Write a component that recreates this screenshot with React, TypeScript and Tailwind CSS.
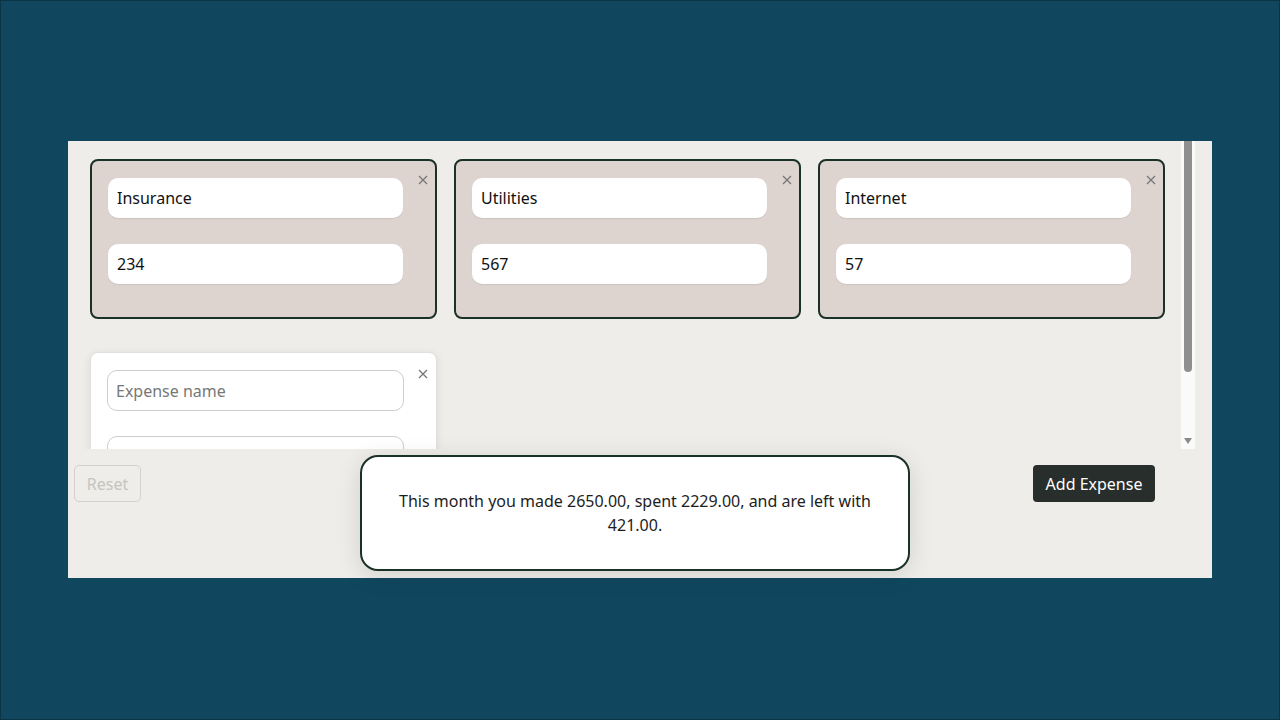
import { useState } from "react";

type Expense = {
  id: number;
  name: string;
  amount: string;
};

const initialExpenses: Expense[] = [
  { id: 1, name: "Insurance", amount: "234" },
  { id: 2, name: "Utilities", amount: "567" },
  { id: 3, name: "Internet", amount: "57" },
];

function CloseButton() {
  return (
    <button
      type="button"
      className="flex h-[12px] w-[12px] items-center justify-center text-[#777]"
      aria-label="Remove expense"
    >
      <svg width="10" height="10" viewBox="0 0 10 10" fill="none" stroke="currentColor" strokeWidth="1.3">
        <path d="M1 1 L9 9 M9 1 L1 9" />
      </svg>
    </button>
  );
}

function ExpenseCard({ expense }: { expense: Expense }) {
  return (
    <div className="flex h-[160px] rounded-[8px] border-2 border-[#1a3127] bg-[#ddd3cf] pl-[16px] pt-[17px]">
      <div className="flex w-[295px] flex-col gap-[26px]">
        <input
          className="h-[40px] w-full rounded-[10px] bg-white px-[9px] text-[16px] text-[#111] shadow-[0_1px_1px_rgba(0,0,0,0.08)] outline-none"
          defaultValue={expense.name}
        />
        <input
          className="h-[40px] w-full rounded-[10px] bg-white px-[9px] text-[16px] text-[#111] shadow-[0_1px_1px_rgba(0,0,0,0.08)] outline-none"
          defaultValue={expense.amount}
        />
      </div>
      <div className="ml-[14px] -mt-[4px]">
        <CloseButton />
      </div>
    </div>
  );
}

function NewExpenseCard() {
  return (
    <div className="flex h-[160px] rounded-[8px] border border-[#e2e0dc] bg-white pl-[16px] pt-[17px] shadow-[0_2px_10px_rgba(0,0,0,0.08)]">
      <div className="flex w-[297px] flex-col gap-[25px]">
        <input
          className="h-[41px] w-full rounded-[10px] border border-[#cfcdca] bg-white px-[8px] text-[16px] text-[#111] outline-none placeholder:text-[#777]"
          placeholder="Expense name"
        />
        <input
          className="h-[41px] w-full rounded-[10px] border border-[#cfcdca] bg-white px-[8px] text-[16px] text-[#111] outline-none placeholder:text-[#777]"
          placeholder="Amount"
        />
      </div>
      <div className="ml-[13px] -mt-[2px]">
        <CloseButton />
      </div>
    </div>
  );
}

function Scrollbar() {
  return (
    <div className="flex h-full w-[14px] flex-col items-center bg-[#fafafa]">
      <div className="h-[231px] w-[8px] rounded-b-[4px] bg-[#8f8f8f]" />
      <div className="flex-1" />
      <svg width="8" height="6" viewBox="0 0 8 6" className="mb-[5px]">
        <path d="M0 0 L8 0 L4 6 Z" fill="#8a8a8a" />
      </svg>
    </div>
  );
}

export default function App() {
  const [expenses] = useState(initialExpenses);

  return (
    <div
      className="h-[720px] w-[1280px] border border-[#0b3447] bg-[#10475f] pl-[67px] pt-[140px]"
      style={{ fontFamily: '"Noto Sans", "Open Sans", sans-serif' }}
    >
      <div className="flex h-[437px] w-[1144px] flex-col bg-[#eeede9]">
        <div className="flex h-[308px] overflow-hidden pr-[17px]">
          <div className="flex-1 overflow-hidden pl-[22px] pt-[18px]">
            <div className="grid grid-cols-[347px_347px_347px] gap-x-[17px] gap-y-[33px]">
              {expenses.map((expense) => (
                <ExpenseCard key={expense.id} expense={expense} />
              ))}
              <NewExpenseCard />
            </div>
          </div>
          <Scrollbar />
        </div>

        <div className="flex flex-1 items-start">
          <button
            type="button"
            disabled
            className="ml-[6px] mt-[16px] h-[37px] w-[67px] rounded-[5px] border border-[#d3d1cd] text-[16px] text-[#c6c4c0]"
          >
            Reset
          </button>
          <div className="ml-[219px] mt-[6px] flex h-[116px] w-[550px] items-center justify-center rounded-[18px] border-2 border-[#1a3127] bg-white px-[30px] text-center text-[16px] leading-[24px] text-[#1d1d1d] shadow-[0_4px_24px_rgba(0,0,0,0.12)]">
            This month you made 2650.00, spent 2229.00, and are left with 421.00.
          </div>
          <button
            type="button"
            className="ml-auto mr-[57px] mt-[16px] h-[37px] w-[122px] rounded-[4px] bg-[#272e2c] text-[16px] text-white"
          >
            Add Expense
          </button>
        </div>
      </div>
    </div>
  );
}
